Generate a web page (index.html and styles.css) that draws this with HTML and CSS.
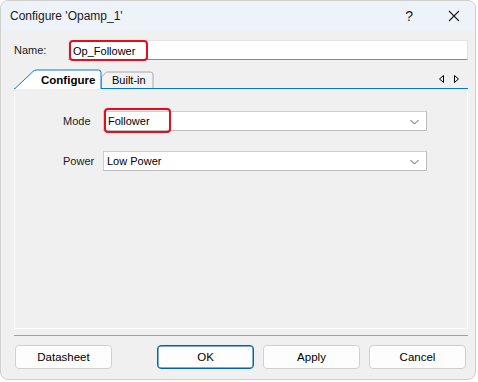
FILE: index.html
```html
<!DOCTYPE html>
<html>
<head>
<meta charset="utf-8">
<link rel="stylesheet" href="styles.css">
</head>
<body>
<div class="window">
  <div class="titlebar">
    <span class="title">Configure 'Opamp_1'</span>
    <span class="help">?</span>
    <svg class="close" width="12" height="12" viewBox="0 0 12 12"><path d="M1 1L11 11M11 1L1 11" stroke="#1a1a1a" stroke-width="1.1" fill="none"/></svg>
  </div>
  <div class="body">
    <div class="name-row">
      <label class="name-label">Name:</label>
      <div class="textbox"><span class="hl hl-name">Op_Follower</span></div>
    </div>
    <div class="tabstrip">
      <div class="tab tab-active">
        <svg class="tab-shape" width="88" height="20" viewBox="0 0 88 20"><path d="M0.5 20L19 2.5Q20.5 1 22.5 1L84.5 1Q87 1 87 3.5L87 20" fill="#fff" stroke="#0078d7" stroke-width="1"/></svg>
        <span class="tab-text bold">Configure</span>
      </div>
      <div class="tab tab-inactive">
        <svg class="tab-shape" width="53" height="17" viewBox="0 0 53 17"><path d="M0.5 17L0.5 6L5.5 1L49.5 1Q52 1 52 3.5L52 17" fill="#f3f3f3" stroke="#a8a8a8" stroke-width="1"/></svg>
        <span class="tab-text">Built-in</span>
      </div>
      <div class="scroll-arrows">
        <svg width="22" height="10" viewBox="0 0 22 10"><path d="M5.5 1.5L5.5 8.5L1.5 5Z" fill="none" stroke="#000" stroke-width="1"/><path d="M16.5 1.5L16.5 8.5L20.5 5Z" fill="none" stroke="#000" stroke-width="1"/></svg>
      </div>
    </div>
    <div class="panel">
      <div class="field-row">
        <span class="field-label">Mode</span>
        <div class="select"><span class="hl hl-mode">Follower</span>
          <svg class="chev" width="9" height="6" viewBox="0 0 9 6"><path d="M0.5 1L4.5 5L8.5 1" fill="none" stroke="#606060" stroke-width="1"/></svg>
        </div>
      </div>
      <div class="field-row">
        <span class="field-label">Power</span>
        <div class="select"><span class="sel-text">Low Power</span>
          <svg class="chev" width="9" height="6" viewBox="0 0 9 6"><path d="M0.5 1L4.5 5L8.5 1" fill="none" stroke="#606060" stroke-width="1"/></svg>
        </div>
      </div>
    </div>
    <div class="separator"></div>
    <div class="buttons">
      <button class="btn">Datasheet</button>
      <div class="btn-group">
        <button class="btn btn-default">OK</button>
        <button class="btn">Apply</button>
        <button class="btn">Cancel</button>
      </div>
    </div>
  </div>
</div>
</body>
</html>
```
FILE: styles.css
```css
html, body {
  margin: 0;
  padding: 0;
  background: #ffffff;
}
body {
  font-family: "Liberation Sans", Arial, sans-serif;
  font-size: 11px;
  color: #000;
}
.window {
  width: 476px;
  height: 380px;
  box-sizing: border-box;
  border: 1px solid #cfcfcf;
  border-radius: 8px;
  background: #f0f0f0;
  overflow: hidden;
  display: flex;
  flex-direction: column;
}
.titlebar {
  height: 30px;
  flex: none;
  background: #eef2f9;
  display: flex;
  align-items: center;
  padding-left: 9px;
  padding-right: 15px;
}
.title {
  font-size: 12px;
  color: #1a1a1a;
  flex: 1;
  padding-bottom: 1px;
}
.help {
  font-family: "Liberation Sans", sans-serif;
  font-size: 14px;
  color: #1a1a1a;
  margin-right: 35px;
}
.close {
  display: block;
}
.body {
  padding: 9px 7px 0 13px;
  display: flex;
  flex-direction: column;
}
.name-row {
  display: flex;
  height: 20px;
  align-items: stretch;
}
.name-label {
  width: 54px;
  line-height: 20px;
  color: #1a1a1a;
}
.textbox {
  flex: 1;
  background: #fff;
  box-sizing: border-box;
  border: 1px solid #e3e3e3;
  border-bottom: 1px solid #8a8a8a;
  position: relative;
  display: flex;
  align-items: center;
}
.hl {
  box-sizing: border-box;
  border: 2px solid #ea0a1e;
  border-radius: 4px;
  display: flex;
  align-items: center;
  padding-left: 2px;
}
.hl-name {
  position: absolute;
  left: 0;
  top: -1px;
  width: 79px;
  height: 21px;
}
.tabstrip {
  margin-top: 9px;
  height: 19px;
  border-bottom: 1px solid #0078d7;
  display: flex;
  align-items: flex-end;
  position: relative;
}
.tab {
  position: relative;
  display: flex;
  align-items: center;
}
.tab-shape {
  position: absolute;
  left: 0;
  top: 0;
}
.tab-text {
  position: relative;
}
.tab-active {
  width: 87px;
  height: 20px;
  margin-bottom: -1px;
  z-index: 2;
}
.tab-active .tab-text {
  margin-left: 27px;
  font-size: 11.5px;
  padding-top: 1px;
}
.bold {
  font-weight: bold;
}
.tab-inactive {
  width: 53px;
  height: 17px;
  margin-left: 0;
}
.tab-inactive .tab-text {
  margin-left: 11px;
  padding-top: 1px;
}
.scroll-arrows {
  margin-left: auto;
  margin-right: 8px;
  align-self: center;
  display: flex;
}
.scroll-arrows svg {
  display: block;
}
.panel {
  height: 240px;
  box-sizing: border-box;
  border: 1px solid #ffffff;
  border-top: none;
  padding: 22px 40px 0 48px;
  display: flex;
  flex-direction: column;
  gap: 20px;
}
.field-row {
  display: flex;
  height: 20px;
}
.field-label {
  width: 40px;
  line-height: 20px;
  color: #1a1a1a;
}
.select {
  flex: 1;
  position: relative;
  box-sizing: border-box;
  background: #fff;
  border: 1px solid #cdcdcd;
  border-bottom-color: #bdbdbd;
  border-right-color: #bdbdbd;
  display: flex;
  align-items: center;
}
.sel-text {
  padding-left: 3px;
}
.hl-mode {
  position: absolute;
  left: 0;
  top: -4px;
  width: 67px;
  height: 25px;
  padding-left: 2px;
}
.chev {
  position: absolute;
  right: 7px;
  top: 7px;
}
.separator {
  margin-top: 6px;
  height: 1px;
  background: #a0a0a0;
}
.buttons {
  margin-top: 9px;
  display: flex;
  justify-content: space-between;
  padding: 0 2px 0 1px;
}
.btn-group {
  display: flex;
  gap: 9px;
}
.btn {
  width: 97px;
  height: 24px;
  box-sizing: border-box;
  border: 1px solid #d0d0d0;
  border-radius: 4px;
  background: #fdfdfd;
  font-family: "Liberation Sans", Arial, sans-serif;
  font-size: 11.5px;
  color: #000;
  padding: 0;
}
.btn-default {
  border: 1px solid #005fb8;
  box-shadow: inset 0 0 0 0.5px #005fb8;
}
```
